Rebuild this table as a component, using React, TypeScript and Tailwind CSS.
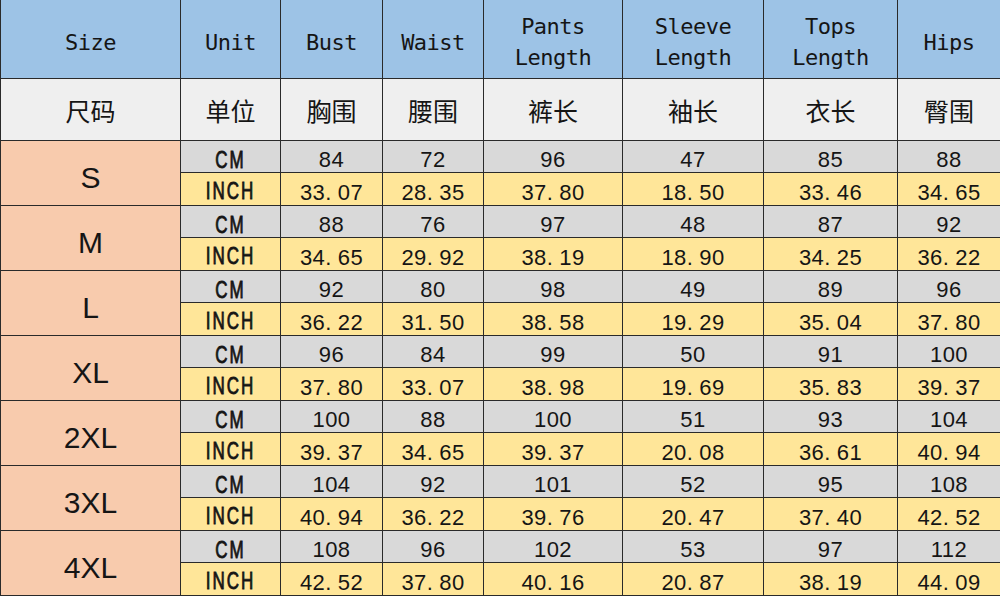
const headers = [
  ["Size"],
  ["Unit"],
  ["Bust"],
  ["Waist"],
  ["Pants", "Length"],
  ["Sleeve", "Length"],
  ["Tops", "Length"],
  ["Hips"],
];

const cnHeaders = ["尺码", "单位", "胸围", "腰围", "裤长", "袖长", "衣长", "臀围"];

const sizes = [
  { size: "S", cm: ["84", "72", "96", "47", "85", "88"], inch: ["33.07", "28.35", "37.80", "18.50", "33.46", "34.65"] },
  { size: "M", cm: ["88", "76", "97", "48", "87", "92"], inch: ["34.65", "29.92", "38.19", "18.90", "34.25", "36.22"] },
  { size: "L", cm: ["92", "80", "98", "49", "89", "96"], inch: ["36.22", "31.50", "38.58", "19.29", "35.04", "37.80"] },
  { size: "XL", cm: ["96", "84", "99", "50", "91", "100"], inch: ["37.80", "33.07", "38.98", "19.69", "35.83", "39.37"] },
  { size: "2XL", cm: ["100", "88", "100", "51", "93", "104"], inch: ["39.37", "34.65", "39.37", "20.08", "36.61", "40.94"] },
  { size: "3XL", cm: ["104", "92", "101", "52", "95", "108"], inch: ["40.94", "36.22", "39.76", "20.47", "37.40", "42.52"] },
  { size: "4XL", cm: ["108", "96", "102", "53", "97", "112"], inch: ["42.52", "37.80", "40.16", "20.87", "38.19", "44.09"] },
];

const mono = "font-['DejaVu_Sans_Mono','Liberation_Mono',monospace]";
const num =
  "flex items-center justify-center pt-[6px] font-['Liberation_Sans',Arial,sans-serif] text-[22px] tracking-[0.4px]";
const unit =
  "inline-block scale-y-[1.4] font-['Liberation_Sans',Arial,sans-serif] text-[17px] tracking-[2px] [-webkit-text-stroke:0.6px_#151515]";

function Value({ v }: { v: string }) {
  const [a, b] = v.split(".");
  if (b === undefined) return <>{v}</>;
  return (
    <>
      <span>{a}.</span>
      <span className="ml-[6px]">{b}</span>
    </>
  );
}

function App() {
  return (
    <div className="h-[596px] w-[1000px] bg-white">
      <div className="grid grid-cols-[179px_99px_101px_100px_138px_140px_133px_102px] grid-rows-[78px_61px_repeat(7,31px_32px)] gap-px bg-[#2a2a2a] pb-px pl-px text-[#151515]">
        {headers.map((lines, i) => (
          <div
            key={`h-${i}`}
            className={`flex flex-col items-center justify-center bg-[#9dc3e6] pt-[6px] text-[22px] leading-[31px] tracking-[-0.5px] ${mono}`}
          >
            {lines.map((l) => (
              <span key={l}>{l}</span>
            ))}
          </div>
        ))}

        {cnHeaders.map((t) => (
          <div
            key={t}
            className="flex items-center justify-center bg-[#efefef] pt-[3px] font-['Noto_Sans_CJK_SC',sans-serif] text-[25px]"
          >
            {t}
          </div>
        ))}

        {sizes.map((row) => [
          <div
            key={`${row.size}-s`}
            className="row-span-2 flex items-center justify-center bg-[#f8cbad] pt-[9px] font-['Liberation_Sans',Arial,sans-serif] text-[30px]"
          >
            {row.size}
          </div>,
          <div
            key={`${row.size}-cmu`}
            className="flex items-center justify-center bg-[#d9d9d9] pt-[8px]"
          >
            <span className={unit}>CM</span>
          </div>,
          ...row.cm.map((v, i) => (
            <div key={`${row.size}-cm-${i}`} className={`${num} bg-[#d9d9d9]`}>
              <Value v={v} />
            </div>
          )),
          <div
            key={`${row.size}-inu`}
            className="flex items-center justify-center bg-[#ffe699] pt-[6px]"
          >
            <span className={unit}>INCH</span>
          </div>,
          ...row.inch.map((v, i) => (
            <div key={`${row.size}-in-${i}`} className={`${num} bg-[#ffe699]`}>
              <Value v={v} />
            </div>
          )),
        ])}
      </div>
    </div>
  );
}

export default App;
